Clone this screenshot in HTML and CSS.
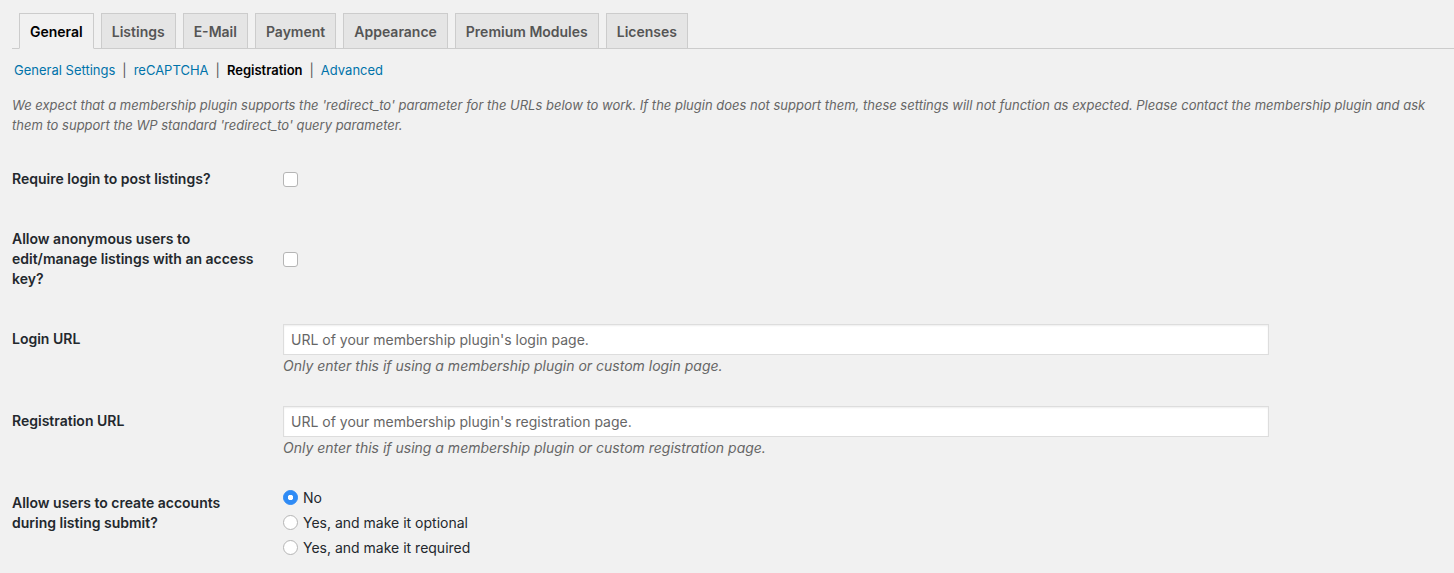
FILE: index.html
```html
<!DOCTYPE html>
<html lang="en">
<head>
  <meta charset="UTF-8">
  <title>Settings - Registration</title>
  <link rel="stylesheet" href="styles.css">
</head>
<body>
  <div class="wrap">
    <nav class="nav-tab-wrapper">
      <a href="#" class="nav-tab nav-tab-active">General</a>
      <a href="#" class="nav-tab">Listings</a>
      <a href="#" class="nav-tab">E-Mail</a>
      <a href="#" class="nav-tab">Payment</a>
      <a href="#" class="nav-tab">Appearance</a>
      <a href="#" class="nav-tab">Premium Modules</a>
      <a href="#" class="nav-tab">Licenses</a>
    </nav>

    <ul class="subsubsub">
      <li><a href="#">General Settings</a><span class="sep">|</span></li>
      <li><a href="#">reCAPTCHA</a><span class="sep">|</span></li>
      <li><a href="#" class="current">Registration</a><span class="sep">|</span></li>
      <li><a href="#">Advanced</a></li>
    </ul>

    <p class="intro">We expect that a membership plugin supports the 'redirect_to' parameter for the URLs below to work. If the plugin does not support them, these settings will not function as expected. Please contact the membership plugin and ask them to support the WP standard 'redirect_to' query parameter.</p>

    <table class="form-table">
      <tr>
        <th>Require login to post listings?</th>
        <td class="middle"><input type="checkbox" class="check"></td>
      </tr>
      <tr>
        <th>Allow anonymous users to edit/manage listings with an access key?</th>
        <td class="middle"><input type="checkbox" class="check"></td>
      </tr>
      <tr>
        <th>Login URL</th>
        <td>
          <input type="text" class="regular-text" placeholder="URL of your membership plugin's login page.">
          <p class="description">Only enter this if using a membership plugin or custom login page.</p>
        </td>
      </tr>
      <tr>
        <th>Registration URL</th>
        <td>
          <input type="text" class="regular-text" placeholder="URL of your membership plugin's registration page.">
          <p class="description">Only enter this if using a membership plugin or custom registration page.</p>
        </td>
      </tr>
      <tr>
        <th>Allow users to create accounts during listing submit?</th>
        <td>
          <fieldset class="radios">
            <label><input type="radio" name="create" class="radio" checked> No</label>
            <label><input type="radio" name="create" class="radio"> Yes, and make it optional</label>
            <label><input type="radio" name="create" class="radio"> Yes, and make it required</label>
          </fieldset>
        </td>
      </tr>
    </table>
  </div>
</body>
</html>
```

FILE: styles.css
```css
* {
  margin: 0;
  padding: 0;
  box-sizing: border-box;
}

body {
  font-family: Inter, "Liberation Sans", sans-serif;
  font-size: 13px;
  color: #23282d;
  background-color: #f1f1f1;
}

.wrap {
  padding-left: 12px;
}

/* tabs */
.nav-tab-wrapper {
  display: flex;
  padding-top: 13px;
  border-bottom: 1px solid #ccc;
}

.nav-tab {
  margin-left: 7px;
  margin-bottom: -1px;
  padding: 6px 10px 4px;
  line-height: 24px;
  font-size: 14px;
  font-weight: 600;
  color: #555;
  text-decoration: none;
  background-color: #e5e5e5;
  border: 1px solid #ccc;
}

.nav-tab-active {
  color: #000;
  background-color: #f1f1f1;
  border-bottom-color: #f1f1f1;
}

/* sub links */
.subsubsub {
  list-style: none;
  display: flex;
  padding: 8px 0 0 2px;
  line-height: 26px;
  font-size: 13px;
}

.subsubsub a {
  color: #0073aa;
  text-decoration: none;
}

.subsubsub a.current {
  color: #000;
  font-weight: 600;
}

.subsubsub .sep {
  color: #555;
  padding: 0 7px;
}

.intro {
  margin-top: 13px;
  font-size: 13px;
  line-height: 19.5px;
  font-style: italic;
  color: #666;
  padding-right: 20px;
}

/* form table */
.form-table {
  margin-top: 14px;
  border-collapse: collapse;
}

.form-table th {
  width: 270px;
  padding: 20px 20px 20px 0;
  vertical-align: top;
  text-align: left;
  font-size: 14px;
  font-weight: 600;
  line-height: 20px;
  color: #23282d;
}

.form-table td {
  padding: 15px 0 15px 1px;
  vertical-align: top;
  font-size: 14px;
  line-height: 20px;
}

.form-table td.middle {
  vertical-align: middle;
}

.check {
  appearance: none;
  display: block;
  width: 15px;
  height: 15px;
  background-color: #fff;
  border: 1px solid #b5b5b5;
  border-radius: 3px;
}

.regular-text {
  display: block;
  width: 986px;
  height: 31px;
  padding: 0 7px;
  font-family: inherit;
  font-size: 14px;
  color: #32373c;
  background-color: #fff;
  border: 1px solid #ddd;
  box-shadow: inset 0 1px 2px rgba(0, 0, 0, 0.07);
}

.regular-text::placeholder {
  color: #666;
}

.description {
  margin-top: 1px;
  font-style: italic;
  color: #666;
  line-height: 20px;
}

.radios {
  margin-top: -3px;
  border: none;
}

.radios label {
  display: flex;
  align-items: center;
  height: 25px;
  color: #23282d;
}

.radio {
  appearance: none;
  width: 15px;
  height: 15px;
  margin-right: 5px;
  border-radius: 50%;
  background-color: #fff;
  border: 1px solid #b5b5b5;
}

.radio:checked {
  background-color: #2f8bf5;
  border-color: #2f8bf5;
  background-image: radial-gradient(circle, #fff 0, #fff 2.5px, transparent 3px);
}
```
